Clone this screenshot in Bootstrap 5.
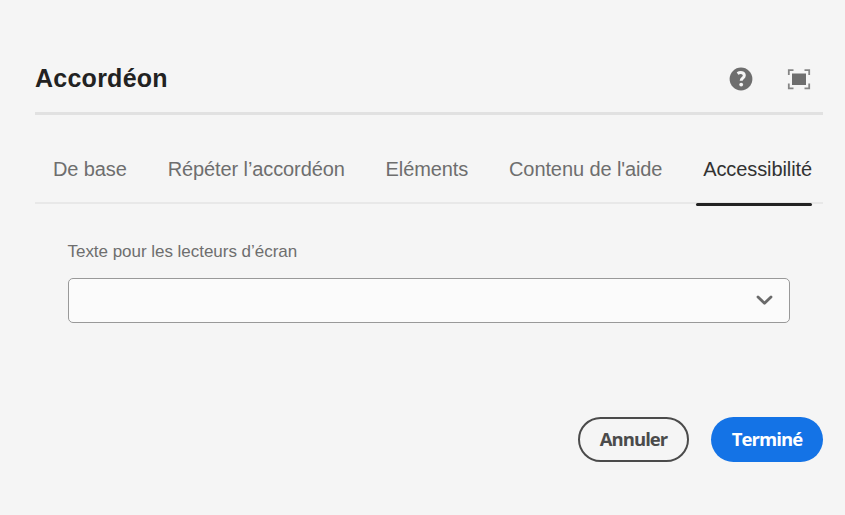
<!DOCTYPE html>
<html lang="fr">
<head>
<meta charset="utf-8">
<meta name="viewport" content="width=device-width, initial-scale=1">
<title>Accordéon</title>
<link href="https://cdn.jsdelivr.net/npm/bootstrap@5.3.0/dist/css/bootstrap.min.css" rel="stylesheet">
<style>
body{background:#f5f5f5;font-family:"Liberation Sans",Arial,sans-serif;color:#6e6e6e}
.panel{height:515px;padding:46px 22px 0 35px;overflow:hidden}
.panel-head{height:69px;border-bottom:3px solid #e1e1e1}
.panel-title{font-size:25px;line-height:30px;font-weight:700;letter-spacing:.25px;color:#222;padding-bottom:3px}
.tool{border:0;background:none;padding:0;line-height:0;color:#6e6e6e}
.tools{gap:34px;padding-right:12px}
.tabs{height:89px;border-bottom:2px solid #e8e8e8;padding:0 11px 0 11px}
.tabs .nav-link{color:#6e6e6e;font-size:20px;line-height:30px;padding:39px 0 0 7px;height:90px;white-space:nowrap;border-radius:0;letter-spacing:-.1px}
.tabs .nav-link.active{color:#323232;position:relative}
.tabs .nav-link.active::after{content:"";position:absolute;left:0;right:0;bottom:-1px;height:3px;border-radius:1.5px;background:#222}
.field{padding:36px 33px 0 32.5px}
.field .form-label{font-size:17px;line-height:24px;margin-bottom:14px;display:block;letter-spacing:-.03px}
.picker{height:45px;border:1px solid #999;border-radius:5px;background:#fbfbfb;padding:0 16px}
.actions{margin-top:94px;gap:22px}
.actions .btn{height:45px;border-radius:23px;font:700 18.5px/1 "Open Sans","Noto Sans",sans-serif;padding:0;letter-spacing:-.95px}
.btn-cancel,.btn-cancel:hover{width:111px;border:2px solid #4b4b4b;color:#4b4b4b}
.btn-done,.btn-done:hover{width:112px;background:#1473e6;border:0;color:#fff}
</style>
</head>
<body>
<main class="panel">
  <header class="panel-head d-flex justify-content-between align-items-center">
    <h1 class="panel-title mb-0">Accordéon</h1>
    <div class="tools d-flex align-items-center">
      <button class="tool" aria-label="Aide"><svg width="24" height="24" viewBox="0 0 24 24"><circle cx="12" cy="12" r="11.4" fill="#6e6e6e"/><path d="M8.5 6.6c3-1.9 6.8-1.1 6.8 1.8 0 2.7-3.1 2.8-3.1 5.4" fill="none" stroke="#f5f5f5" stroke-width="3"/><circle cx="12.2" cy="17.6" r="1.9" fill="#f5f5f5"/></svg></button>
      <button class="tool" aria-label="Plein écran"><svg width="24" height="22" viewBox="0 0 24 22"><path d="M5 5.5h14v11.5H5z" fill="#6e6e6e"/><path d="M1.8 7V2.2H6.5M17.5 2.2h4.7V7M22.2 15.5v4.8h-4.7M6.5 20.3H1.8v-4.8" fill="none" stroke="#858585" stroke-width="1.8"/></svg></button>
    </div>
  </header>
  <nav class="nav tabs flex-nowrap justify-content-between">
    <a class="nav-link" href="#">De base</a>
    <a class="nav-link" href="#">Répéter l’accordéon</a>
    <a class="nav-link" href="#">Eléments</a>
    <a class="nav-link" href="#">Contenu de l'aide</a>
    <a class="nav-link active" href="#">Accessibilité</a>
  </nav>
  <div class="field">
    <label class="form-label" for="reader">Texte pour les lecteurs d’écran</label>
    <button id="reader" class="picker w-100 d-flex align-items-center justify-content-end"><svg width="17" height="11" viewBox="0 0 17 11"><path d="M2 2l6.5 6.3L15 2" fill="none" stroke="#6a6a6a" stroke-width="2.8" stroke-linecap="round" stroke-linejoin="round"/></svg></button>
  </div>
  <div class="actions d-flex justify-content-end">
    <button class="btn btn-cancel">Annuler</button>
    <button class="btn btn-done">Terminé</button>
  </div>
</main>
<script src="https://cdn.jsdelivr.net/npm/bootstrap@5.3.0/dist/js/bootstrap.bundle.min.js"></script>
</body>
</html>
